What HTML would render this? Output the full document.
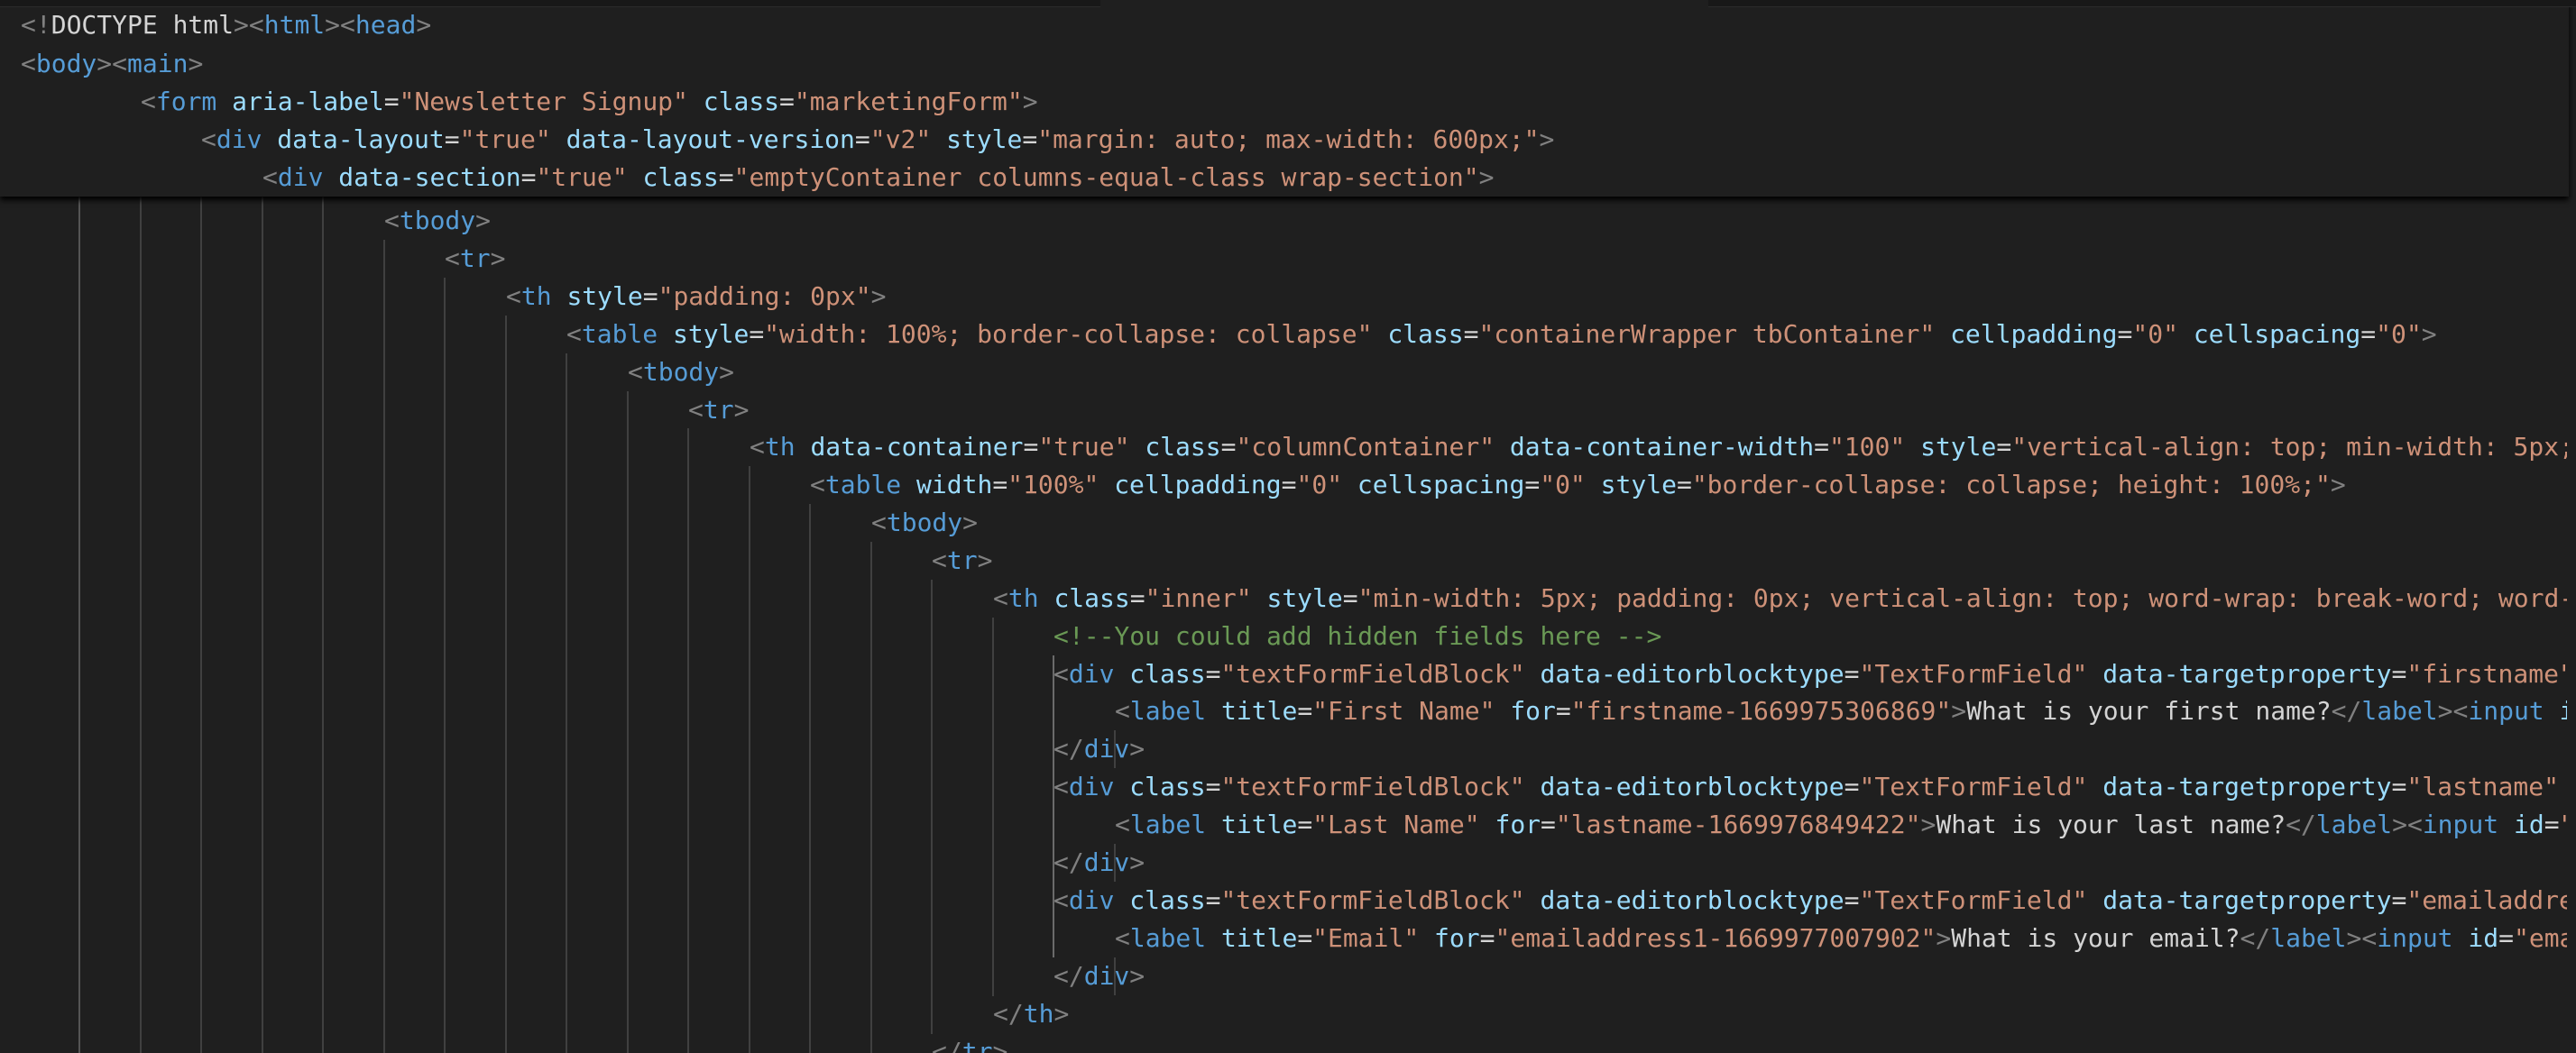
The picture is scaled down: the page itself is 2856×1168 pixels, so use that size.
<!DOCTYPE html>
<html><head><style>
html,body{margin:0;padding:0;background:#1f1f1f;width:2856px;height:1168px;overflow:hidden}
#wrap{position:relative;width:2856px;height:1168px;overflow:hidden;font-family:"DejaVu Sans Mono","Liberation Mono",monospace;font-size:28px;color:#d4d4d4}
.l{position:absolute;height:42px;line-height:42px;white-space:pre;left:0}
.b{color:#808080}.t{color:#569cd6}.a{color:#9cdcfe}.s{color:#ce9178}.e{color:#d4d4d4}.c{color:#6a9955}
.g{position:absolute;width:2px;background:#404040}
#hdr{position:absolute;left:0;top:0;width:2848px;height:218px;background:#1f1f1f;box-shadow:0 4px 6px #000;z-index:5;overflow:hidden}
#strip{position:absolute;left:0;top:0;width:2856px;height:7px;background:#181818;border-bottom:1px solid #2a2a2a;z-index:6}
#tab{position:absolute;left:1220px;top:0;width:674px;height:8px;background:#1f1f1f;z-index:7}
#clip{position:absolute;left:0;top:0;width:2846px;height:1168px;overflow:hidden}
</style></head><body><div id="wrap">
<div id="clip">
<div class="g" style="left:87px;top:218px;height:950px;background:#555"></div>
<div class="g" style="left:155px;top:218px;height:950px"></div>
<div class="g" style="left:222px;top:218px;height:950px"></div>
<div class="g" style="left:290px;top:218px;height:950px"></div>
<div class="g" style="left:357px;top:218px;height:950px"></div>
<div class="g" style="left:425px;top:266px;height:902px"></div>
<div class="g" style="left:492px;top:308px;height:860px"></div>
<div class="g" style="left:560px;top:350px;height:818px"></div>
<div class="g" style="left:627px;top:392px;height:776px"></div>
<div class="g" style="left:695px;top:434px;height:734px"></div>
<div class="g" style="left:762px;top:475px;height:693px"></div>
<div class="g" style="left:830px;top:517px;height:651px"></div>
<div class="g" style="left:897px;top:559px;height:609px"></div>
<div class="g" style="left:965px;top:601px;height:567px"></div>
<div class="g" style="left:1032px;top:643px;height:504px"></div>
<div class="g" style="left:1100px;top:685px;height:420px"></div>
<div class="g" style="left:1167px;top:727px;height:335px;background:#6a6a6a"></div>
<div class="g" style="left:1235px;top:810px;height:42px"></div>
<div class="g" style="left:1235px;top:936px;height:42px"></div>
<div class="g" style="left:1235px;top:1062px;height:42px"></div>

<div class="l" style="top:224px;left:426px"><span class="b">&lt;</span><span class="t">tbody</span><span class="b">&gt;</span></div>
<div class="l" style="top:266px;left:493px"><span class="b">&lt;</span><span class="t">tr</span><span class="b">&gt;</span></div>
<div class="l" style="top:308px;left:561px"><span class="b">&lt;</span><span class="t">th</span> <span class="a">style</span><span class="e">=</span><span class="s">"padding: 0px"</span><span class="b">&gt;</span></div>
<div class="l" style="top:350px;left:628px"><span class="b">&lt;</span><span class="t">table</span> <span class="a">style</span><span class="e">=</span><span class="s">"width: 100%; border-collapse: collapse"</span> <span class="a">class</span><span class="e">=</span><span class="s">"containerWrapper tbContainer"</span> <span class="a">cellpadding</span><span class="e">=</span><span class="s">"0"</span> <span class="a">cellspacing</span><span class="e">=</span><span class="s">"0"</span><span class="b">&gt;</span></div>
<div class="l" style="top:392px;left:696px"><span class="b">&lt;</span><span class="t">tbody</span><span class="b">&gt;</span></div>
<div class="l" style="top:434px;left:763px"><span class="b">&lt;</span><span class="t">tr</span><span class="b">&gt;</span></div>
<div class="l" style="top:475px;left:831px"><span class="b">&lt;</span><span class="t">th</span> <span class="a">data-container</span><span class="e">=</span><span class="s">"true"</span> <span class="a">class</span><span class="e">=</span><span class="s">"columnContainer"</span> <span class="a">data-container-width</span><span class="e">=</span><span class="s">"100"</span> <span class="a">style</span><span class="e">=</span><span class="s">"vertical-align: top; min-width: 5px; padding: 0px"</span><span class="b">&gt;</span></div>
<div class="l" style="top:517px;left:898px"><span class="b">&lt;</span><span class="t">table</span> <span class="a">width</span><span class="e">=</span><span class="s">"100%"</span> <span class="a">cellpadding</span><span class="e">=</span><span class="s">"0"</span> <span class="a">cellspacing</span><span class="e">=</span><span class="s">"0"</span> <span class="a">style</span><span class="e">=</span><span class="s">"border-collapse: collapse; height: 100%;"</span><span class="b">&gt;</span></div>
<div class="l" style="top:559px;left:966px"><span class="b">&lt;</span><span class="t">tbody</span><span class="b">&gt;</span></div>
<div class="l" style="top:601px;left:1033px"><span class="b">&lt;</span><span class="t">tr</span><span class="b">&gt;</span></div>
<div class="l" style="top:643px;left:1101px"><span class="b">&lt;</span><span class="t">th</span> <span class="a">class</span><span class="e">=</span><span class="s">"inner"</span> <span class="a">style</span><span class="e">=</span><span class="s">"min-width: 5px; padding: 0px; vertical-align: top; word-wrap: break-word; word-break: break-word"</span><span class="b">&gt;</span></div>
<div class="l c" style="top:685px;left:1168px">&lt;!--You could add hidden fields here --&gt;</div>
<div class="l" style="top:727px;left:1168px"><span class="b">&lt;</span><span class="t">div</span> <span class="a">class</span><span class="e">=</span><span class="s">"textFormFieldBlock"</span> <span class="a">data-editorblocktype</span><span class="e">=</span><span class="s">"TextFormField"</span> <span class="a">data-targetproperty</span><span class="e">=</span><span class="s">"firstname"</span> <span class="a">data-prefill</span><span class="e">=</span><span class="s">"false"</span><span class="b">&gt;</span></div>
<div class="l" style="top:768px;left:1236px"><span class="b">&lt;</span><span class="t">label</span> <span class="a">title</span><span class="e">=</span><span class="s">"First Name"</span> <span class="a">for</span><span class="e">=</span><span class="s">"firstname-1669975306869"</span><span class="b">&gt;</span>What is your first name?<span class="b">&lt;/</span><span class="t">label</span><span class="b">&gt;&lt;</span><span class="t">input</span> <span class="a">id</span><span class="e">=</span><span class="s">"firstname-1669975306869"</span></div>
<div class="l" style="top:810px;left:1168px"><span class="b">&lt;/</span><span class="t">div</span><span class="b">&gt;</span></div>
<div class="l" style="top:852px;left:1168px"><span class="b">&lt;</span><span class="t">div</span> <span class="a">class</span><span class="e">=</span><span class="s">"textFormFieldBlock"</span> <span class="a">data-editorblocktype</span><span class="e">=</span><span class="s">"TextFormField"</span> <span class="a">data-targetproperty</span><span class="e">=</span><span class="s">"lastname"</span> <span class="a">data-prefill</span><span class="e">=</span><span class="s">"false"</span><span class="b">&gt;</span></div>
<div class="l" style="top:894px;left:1236px"><span class="b">&lt;</span><span class="t">label</span> <span class="a">title</span><span class="e">=</span><span class="s">"Last Name"</span> <span class="a">for</span><span class="e">=</span><span class="s">"lastname-1669976849422"</span><span class="b">&gt;</span>What is your last name?<span class="b">&lt;/</span><span class="t">label</span><span class="b">&gt;&lt;</span><span class="t">input</span> <span class="a">id</span><span class="e">=</span><span class="s">"lastname-1669976849422"</span></div>
<div class="l" style="top:936px;left:1168px"><span class="b">&lt;/</span><span class="t">div</span><span class="b">&gt;</span></div>
<div class="l" style="top:978px;left:1168px"><span class="b">&lt;</span><span class="t">div</span> <span class="a">class</span><span class="e">=</span><span class="s">"textFormFieldBlock"</span> <span class="a">data-editorblocktype</span><span class="e">=</span><span class="s">"TextFormField"</span> <span class="a">data-targetproperty</span><span class="e">=</span><span class="s">"emailaddress1"</span> <span class="a">data-prefill</span><span class="e">=</span><span class="s">"false"</span><span class="b">&gt;</span></div>
<div class="l" style="top:1020px;left:1236px"><span class="b">&lt;</span><span class="t">label</span> <span class="a">title</span><span class="e">=</span><span class="s">"Email"</span> <span class="a">for</span><span class="e">=</span><span class="s">"emailaddress1-1669977007902"</span><span class="b">&gt;</span>What is your email?<span class="b">&lt;/</span><span class="t">label</span><span class="b">&gt;&lt;</span><span class="t">input</span> <span class="a">id</span><span class="e">=</span><span class="s">"emailaddress1-1669977007902"</span></div>
<div class="l" style="top:1062px;left:1168px"><span class="b">&lt;/</span><span class="t">div</span><span class="b">&gt;</span></div>
<div class="l" style="top:1104px;left:1101px"><span class="b">&lt;/</span><span class="t">th</span><span class="b">&gt;</span></div>
<div class="l" style="top:1146px;left:1033px"><span class="b">&lt;/</span><span class="t">tr</span><span class="b">&gt;</span></div>
</div>

<div id="hdr">
<div class="l" style="top:7px;left:23px"><span class="b">&lt;!</span>DOCTYPE html<span class="b">&gt;&lt;</span><span class="t">html</span><span class="b">&gt;&lt;</span><span class="t">head</span><span class="b">&gt;</span></div>
<div class="l" style="top:50px;left:23px"><span class="b">&lt;</span><span class="t">body</span><span class="b">&gt;&lt;</span><span class="t">main</span><span class="b">&gt;</span></div>
<div class="l" style="top:92px;left:156px"><span class="b">&lt;</span><span class="t">form</span> <span class="a">aria-label</span><span class="e">=</span><span class="s">"Newsletter Signup"</span> <span class="a">class</span><span class="e">=</span><span class="s">"marketingForm"</span><span class="b">&gt;</span></div>
<div class="l" style="top:134px;left:223px"><span class="b">&lt;</span><span class="t">div</span> <span class="a">data-layout</span><span class="e">=</span><span class="s">"true"</span> <span class="a">data-layout-version</span><span class="e">=</span><span class="s">"v2"</span> <span class="a">style</span><span class="e">=</span><span class="s">"margin: auto; max-width: 600px;"</span><span class="b">&gt;</span></div>
<div class="l" style="top:176px;left:291px"><span class="b">&lt;</span><span class="t">div</span> <span class="a">data-section</span><span class="e">=</span><span class="s">"true"</span> <span class="a">class</span><span class="e">=</span><span class="s">"emptyContainer columns-equal-class wrap-section"</span><span class="b">&gt;</span></div>
</div>
<div id="strip"></div><div id="tab"></div>
</div></body></html>
